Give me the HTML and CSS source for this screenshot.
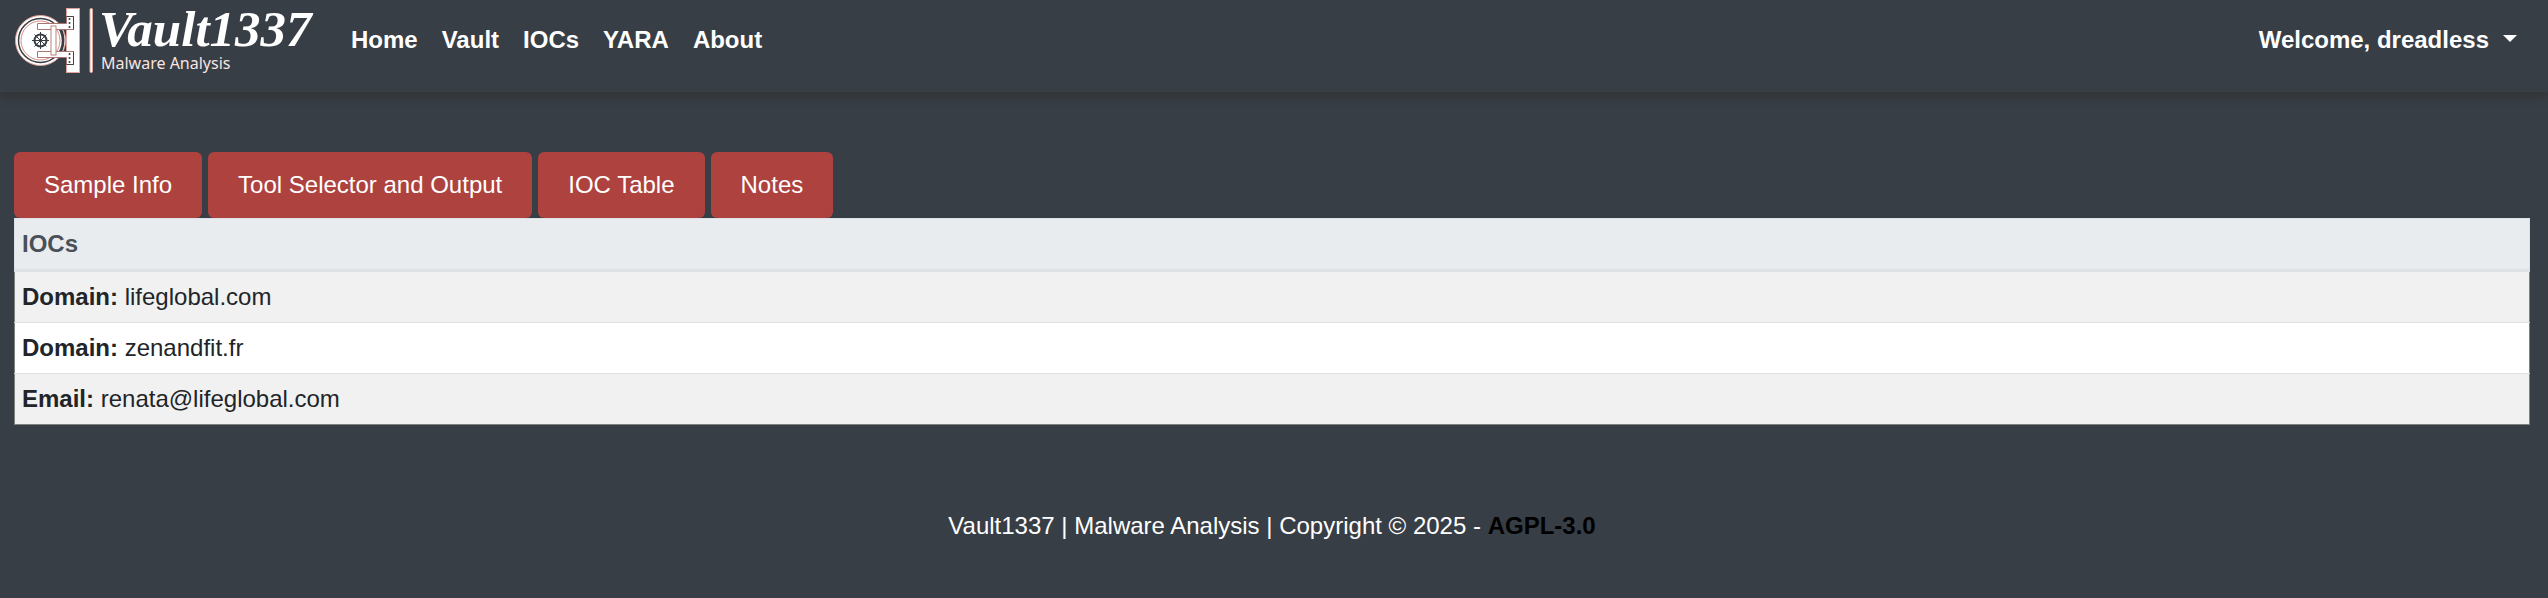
FILE: index.html
```html
<!DOCTYPE html>
<html lang="en">
<head>
<meta charset="utf-8">
<title>Vault1337</title>
<link rel="stylesheet" href="styles.css">
</head>
<body>
<header class="navbar">
  <a class="brand" href="#" aria-label="Vault1337 Malware Analysis">
    <svg class="logo" width="304" height="80" viewBox="14 0 304 80">
      <g fill="#fff" stroke="#e0a49c" stroke-width="1">
        <circle cx="40.500" cy="40.500" r="25"/>
        <circle cx="40.500" cy="40.500" r="22" stroke="#373d43" stroke-width="1.500"/>
        <circle cx="40.500" cy="40.500" r="19.500" stroke="#d98c83"/>
        <path d="M61 29q5 11 0 23" fill="none" stroke="#373d43" stroke-width="2"/>
        <rect x="66.500" y="8.500" width="13" height="64"/>
        <path d="M37.500 23.500H66.500V16.500H73.500V29.500H37.500Z" stroke="#a9766f"/>
        <path d="M37.500 51.500H73.500V64.500H66.500V57.500H37.500Z" stroke="#a9766f"/>
        <rect x="51" y="26" width="5" height="29" stroke="#b8847c"/>
        <rect x="90" y="8.500" width="2.500" height="64" rx="1"/>
      </g>
      <path d="M66.500 16.500H73.500V29.500M73.500 51.500V64.500H66.500" fill="none" stroke="#4a4145"/>
      <g fill="none" stroke="#373d43">
        <circle cx="40.500" cy="40.500" r="6" stroke-width="2"/>
        <path d="M40.500 32V49M32 40.500H49M34.500 34.500L46.500 46.500M46.500 34.500L34.500 46.500"/>
      </g>
      <g fill="#373d43">
        <circle cx="69.500" cy="19" r="1"/><circle cx="69.500" cy="23" r="1"/><circle cx="69.500" cy="27" r="1"/>
        <circle cx="69.500" cy="54" r="1"/><circle cx="69.500" cy="58" r="1"/><circle cx="69.500" cy="62" r="1"/>
      </g>
      <text class="logo-name" x="99" y="46">Vault1337</text>
      <text class="logo-tag" x="101" y="69">Malware Analysis</text>
    </svg>
  </a>
  <nav class="links">
    <a href="#">Home</a>
    <a href="#">Vault</a>
    <a href="#">IOCs</a>
    <a href="#">YARA</a>
    <a href="#">About</a>
  </nav>
  <button class="user" type="button">Welcome, dreadless<span class="caret"></span></button>
</header>
<main class="content">
  <div class="tabs">
    <button type="button">Sample Info</button>
    <button type="button">Tool Selector and Output</button>
    <button type="button">IOC Table</button>
    <button type="button">Notes</button>
  </div>
  <table class="iocs">
    <thead><tr><th>IOCs</th></tr></thead>
    <tbody>
      <tr><td><strong>Domain:</strong> lifeglobal.com</td></tr>
      <tr><td><strong>Domain:</strong> zenandfit.fr</td></tr>
      <tr><td><strong>Email:</strong> renata@lifeglobal.com</td></tr>
    </tbody>
  </table>
</main>
<footer class="footer">Vault1337 | Malware Analysis | Copyright © 2025 - <a href="#">AGPL-3.0</a></footer>
</body>
</html>
```
FILE: styles.css
```css
* {
  box-sizing: border-box;
}

body {
  margin: 0;
  background: #373e45;
  color: #fff;
  font: 24px/36px "Liberation Sans", Arial, sans-serif;
}

.navbar {
  display: flex;
  align-items: flex-start;
  height: 92px;
  padding: 0 24px 0 14px;
  background: #373e45;
  box-shadow: 0 6px 6px rgba(51, 51, 51, 0.7);
}

.brand {
  display: block;
}

.logo {
  display: block;
}

.logo-name {
  fill: #fff;
  font: italic bold 51px "Liberation Serif", serif;
}

.logo-tag {
  fill: #f8e4e1;
  font: 16px "Noto Sans", sans-serif;
}

.links {
  display: flex;
  gap: 24px;
  padding: 22px 0 0 33px;
}

.links a {
  color: #fff;
  font-weight: bold;
  text-decoration: none;
}

.user {
  display: flex;
  align-items: center;
  gap: 14px;
  margin: 22px 7px 0 auto;
  padding: 0;
  border: 0;
  background: none;
  color: #fff;
  font: inherit;
  font-weight: bold;
}

.caret {
  margin-bottom: 4px;
  border: 7px solid transparent;
  border-top-color: #fff;
  border-bottom: 0;
}

.content {
  padding: 60px 18px 0 14px;
}

.tabs {
  display: flex;
  gap: 6px;
}

.tabs button {
  padding: 15px 30px;
  border: 0;
  border-radius: 6px;
  background: #ad423f;
  color: #fff;
  font: inherit;
}

.iocs {
  width: 100%;
  border: 1px solid #808080;
  border-collapse: collapse;
  background: #fff;
  color: #212529;
}

.iocs th,
.iocs td {
  padding: 7px;
  text-align: left;
}

.iocs th {
  border: 1px solid #dee2e6;
  border-bottom: 3px solid #dee2e6;
  background: #e8ecef;
  color: #495057;
}

.iocs td {
  border-top: 1px solid #dee2e6;
}

.iocs tbody tr:nth-child(odd) {
  background: #f1f1f1;
}

.footer {
  padding: 83px 4px 53px 0;
  text-align: center;
}

.footer a {
  color: #000;
  font-weight: bold;
  text-decoration: none;
}
```
